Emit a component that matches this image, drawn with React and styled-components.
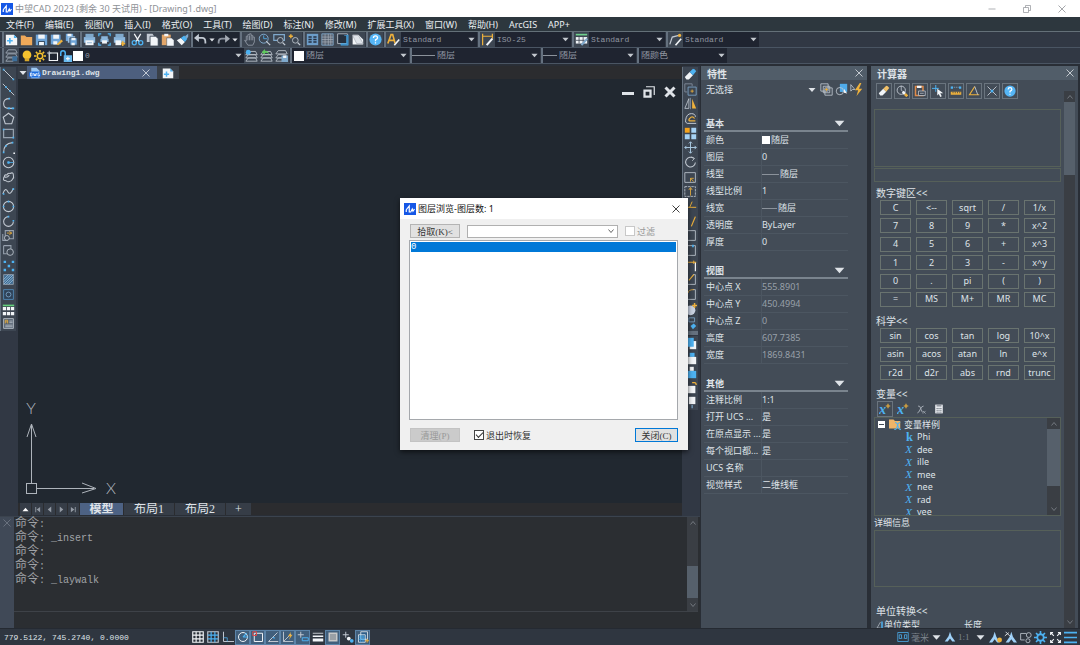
import React from "react";
import styled, { createGlobalStyle } from "styled-components";

const L = "#c3cad3";
const B = "#4db2f2";
const O = "#eeb13c";
const W = "#f2f5f8";
const S = "#7fa9cc";

const icons = {
  logo: (
    <>
      <rect width="16" height="16" fill="#1557e6" />
      <path d="M3 12V9M3 9l4-5v8h2l2-4 1 3 2-3" stroke="#fff" strokeWidth="1.6" fill="none" />
    </>
  ),
  newFile: (
    <>
      <path d="M1 2h10l4 4v9H1z" fill={W} />
      <path d="M11 2v4h4z" fill={B} />
      <path d="M6 6v7M2.500 9.500h7" stroke={B} strokeWidth="2" />
    </>
  ),
  folder: <path d="M1 3h5l2 2h7v10H1z" fill="#efa95a" />,
  save: (
    <>
      <path d="M1 2h14v13H1z" fill="#6ea4d8" />
      <path d="M4 2h8v5H4z" fill={W} />
      <path d="M4 10h8v5H4z" fill="#26374b" />
      <path d="M5 11h6v4H5z" fill={W} />
    </>
  ),
  saveAs: (
    <>
      <path d="M1 2h12v12H1z" fill="#6ea4d8" />
      <path d="M4 2h7v5H4zM4 10h5v4H4z" fill={W} />
      <path d="M8 14l6-6 2 2-6 5z" fill={O} />
    </>
  ),
  saveAll: (
    <>
      <path d="M1 1h9v9H1z" fill="#6ea4d8" />
      <path d="M3 1h5v3H3z" fill={W} />
      <path d="M3.500 4h9v8h-9z" fill="#9cc3e6" />
      <path d="M6 6h9v9H6z" fill="#6ea4d8" stroke="#394453" />
      <path d="M8 6h5v3H8zM8 12h4v3H8z" fill={W} />
    </>
  ),
  print: (
    <>
      <path d="M3 1h10v4H3z" fill={S} />
      <path d="M1 5h14v7H1z" fill="#8ab6dc" />
      <path d="M3 9h10v6H3z" fill={W} />
      <path d="M5 12h6" stroke={S} />
    </>
  ),
  preview: (
    <>
      <path d="M1 4V1h3M12 1h3v3M15 12v3h-3M4 15H1v-3" stroke={B} fill="none" strokeWidth="1.500" />
      <path d="M4 4h8v3H4zM3 7h10v4H3z" fill="#8ab6dc" />
      <path d="M5 9h6v4H5z" fill={W} />
    </>
  ),
  plot: (
    <>
      <path d="M3 1h10v4H3z" fill={S} />
      <path d="M1 5h14v7H1z" fill="#8ab6dc" />
      <path d="M3 9h7v6H3z" fill={W} />
      <path d="M10 13h5M12 10v6" stroke={O} strokeWidth="2" />
    </>
  ),
  cut: (
    <>
      <path d="M4 1l6 10M12 1L6 11" stroke={W} strokeWidth="1.500" />
      <circle cx="4" cy="12" r="2.500" stroke={B} strokeWidth="1.600" fill="none" />
      <circle cx="12" cy="12" r="2.500" stroke={B} strokeWidth="1.600" fill="none" />
    </>
  ),
  copy: (
    <>
      <path d="M1 1h7l2 3v7H1z" fill={L} />
      <path d="M5 4h7l3 3v9H5z" fill={W} stroke="#394453" />
    </>
  ),
  paste: (
    <>
      <path d="M1 2h11v13H1z" fill="#e2a66a" />
      <path d="M4 1h5v3H4z" fill={W} />
      <path d="M7 6h6l3 3v7H7z" fill={W} stroke="#394453" strokeWidth=".6" />
    </>
  ),
  match: (
    <>
      <path d="M1 9l5-3 5 5-4 4z" fill={W} />
      <path d="M6 6l4-3 4 4-3 4z" fill={B} />
      <path d="M11 4l4-3v4l-2 2z" fill={S} />
    </>
  ),
  undo: (
    <>
      <path d="M3 6h7q4 0 4 5v2" stroke={L} strokeWidth="2.200" fill="none" />
      <path d="M6 1v10L0 6z" fill={L} />
    </>
  ),
  redo: (
    <>
      <path d="M13 7H6q-4 0-4 4v2" stroke="#8d949f" strokeWidth="2.200" fill="none" />
      <path d="M10 2v10l6-5z" fill="#a5abb4" />
    </>
  ),
  hand: (
    <path
      d="M4 10V4h2V2h2V1h2v2h2v2h2v6l-2 4H6L2 9z M6 4v5M8 3v6M10 3v6M12 5v4"
      stroke="#878f9b"
      strokeWidth="1.200"
      fill="none"
    />
  ),
  zoom: (
    <>
      <circle cx="7" cy="7" r="5.500" stroke={S} strokeWidth="1.200" fill="none" />
      <path d="M7 3v4h4" stroke={B} fill="none" />
      <path d="M10 10l5 5" stroke={L} strokeWidth="1.500" />
    </>
  ),
  zoomWindow: (
    <>
      <path d="M1 2h13v7H1z" stroke={S} strokeWidth="1.500" fill="none" />
      <circle cx="9" cy="9" r="3.500" stroke={L} fill="#3b4451" />
      <path d="M12 12l3 3" stroke={L} strokeWidth="1.500" />
    </>
  ),
  zoomPrev: (
    <>
      <path d="M1 4h5M3.500 1.500v5" stroke={O} strokeWidth="1.800" />
      <circle cx="9" cy="9" r="3.500" stroke={L} fill="none" />
      <path d="M12 12l3 3" stroke={L} strokeWidth="1.500" />
    </>
  ),
  propsPanel: (
    <>
      <path d="M1 1h14v14H1z" fill="#6c9dc9" />
      <path d="M3 5h4M3 8h4M3 11h4M9 5h4M9 8h4M9 11h4" stroke="#263142" strokeWidth="1.800" />
    </>
  ),
  design: (
    <>
      <path d="M1 1h14v14H1z" stroke={S} fill="#5b6573" />
      <path d="M5 1v14M9 1v14M12 1v14M1 5h14M1 8h14M1 11h14" stroke="#a8b0bb" strokeWidth=".8" />
    </>
  ),
  palette: (
    <>
      <path d="M2 1h12v12H2z" stroke={L} fill="#26303e" />
      <path d="M10 3h3v10H6v2h9V2" stroke={B} fill="#3c8bc2" strokeWidth=".6" />
    </>
  ),
  note: (
    <>
      <path d="M2 2h7l6 6v6H2z" fill={W} />
      <path d="M2 3l5 10h8L9 3z" fill="#dfe4ea" stroke="#8b949f" strokeWidth=".6" />
    </>
  ),
  help: (
    <>
      <circle cx="8" cy="8" r="7.500" fill="#55b5f5" />
      <path d="M5.500 6q0-2.500 2.500-2.500T10.500 6Q10.500 7 8 8.500V10M8 11.500v1.500" stroke="#fff" strokeWidth="1.600" fill="none" />
    </>
  ),
  textStyle: (
    <>
      <path d="M1 13L5 2h2l3 11M3 9h6" stroke={O} strokeWidth="2" fill="none" />
      <path d="M9 15l6-7" stroke={W} strokeWidth="2" />
    </>
  ),
  dimStyle: (
    <>
      <path d="M2 1v14M14 1v6M2 4h12" stroke={O} strokeWidth="1.500" />
      <path d="M7 15l7-8" stroke={W} strokeWidth="2.500" />
    </>
  ),
  tableStyle: (
    <>
      <path d="M1 1h14v2H1z" fill="#6fd08c" />
      <path d="M1 5h14v8H1z" fill={W} />
      <path d="M5 5v8M10 5v8M1 9h14" stroke="#3b4451" />
      <path d="M8 15l7-8" stroke={S} strokeWidth="2.500" />
    </>
  ),
  leaderStyle: (
    <>
      <path d="M1 14l3-9 8-2" stroke={L} fill="none" strokeWidth="1.500" />
      <circle cx="13" cy="3" r="2" fill={O} />
      <path d="M8 15l7-8" stroke={W} strokeWidth="2" />
    </>
  ),
  layers: (
    <>
      <path d="M4 1h9l2 4H1zM4 6h9l2 4H1zM4 11h6v4H1z" fill="none" stroke="#97a1ae" strokeWidth="1.200" />
      <path d="M9 9h6v6H9z" fill="#3c6f9c" />
    </>
  ),
  layerBlue: (
    <>
      <path d="M4 3h9l2 4H1zM4 7h9l2 4H1zM4 11h9l2 4H1z" fill="#3b4451" stroke={L} />
      <circle cx="4" cy="4" r="3" fill={B} />
    </>
  ),
  layerGreen: (
    <>
      <path d="M4 3h9l2 4H1zM4 7h9l2 4H1zM4 11h9l2 4H1z" fill="#3b4451" stroke={L} />
      <path d="M6 0L2 4l4 3V5q4-1 5 2 0-5-5-5z" fill="#5fc95e" />
    </>
  ),
  layerSave: (
    <>
      <path d="M4 2h9l2 4H1zM4 7h9l2 4H1zM4 11h6v4H1z" fill="#3b4451" stroke={L} />
      <path d="M8 8h8v8H8z" fill={S} />
      <path d="M10 8h4v3h-4z" fill={W} />
    </>
  ),
  bulb: (
    <>
      <circle cx="8" cy="6.500" r="5.800" fill="#f5c22f" />
      <path d="M5 11h6v4H5z" fill="#d8a82a" />
    </>
  ),
  sun: (
    <>
      <circle cx="8" cy="8" r="3.600" fill="none" stroke="#f5c22f" strokeWidth="2" />
      <path
        d="M8 0v3M8 13v3M0 8h3M13 8h3M2.500 2.500l2 2M11.500 11.500l2 2M2.500 13.500l2-2M11.500 4.500l2-2"
        stroke="#f5c22f"
        strokeWidth="2"
      />
    </>
  ),
  viewport: (
    <>
      <path d="M3 4h11v10H3z" stroke={W} strokeWidth="1.500" fill="none" />
      <path d="M0 4h6M3 1v6" stroke={L} strokeWidth="1.200" />
    </>
  ),
  unlock: (
    <>
      <path d="M1 8V4q0-3 3-3t3 3v4" stroke={B} strokeWidth="2" fill="none" />
      <path d="M5 7h11v9H5z" fill="#68b9ee" />
      <path d="M10.500 9v5M8 11.500h5" stroke={W} strokeWidth="1.500" />
    </>
  ),
  dwg: (
    <>
      <path d="M3 1h7l4 4v10H3z" fill="#9dc9f5" />
      <rect y="6" width="16" height="8" rx="3" fill="#1f6fe0" />
      <path d="M2 8v4h2V8zM6 8l1 4 1-3 1 3 1-4M14 8h-2v4h2v-2" stroke="#fff" fill="none" />
    </>
  ),
  line: (
    <>
      <path d="M2 2l12 12" stroke={L} strokeWidth="1.200" />
      <path d="M1 1h2v2H1zM13 13h2v2h-2z" fill={B} />
    </>
  ),
  xline: (
    <>
      <path d="M1 1l14 14" stroke={L} strokeWidth="1.200" />
      <path d="M4 4h2v2H4zM9 9h2v2H9z" fill={B} />
    </>
  ),
  pline: (
    <>
      <path d="M9 2Q2 2 2 8t6 6h6" stroke={L} strokeWidth="1.300" fill="none" />
      <path d="M8 1h2v2H8zM7 13h3v2H7zM12 13h3v2h-3z" fill={B} />
    </>
  ),
  polygon: <path d="M8 1.500l6.500 5-2.500 8H4l-2.500-8z" stroke={L} strokeWidth="1.300" fill="none" />,
  rect: (
    <>
      <path d="M2 3h12v10H2z" stroke="#97a1ae" strokeWidth="1.500" fill="none" />
      <path d="M1 2h2v2H1zM13 12h2v2h-2z" fill={B} />
    </>
  ),
  arc: (
    <>
      <path d="M2 14Q2 3 13 2" stroke={L} strokeWidth="1.300" fill="none" />
      <path d="M1 13h2v2H1zM4 5h2v2H4zM12 1h2v2h-2z" fill={B} />
      <path d="M14 14h2v2h-2z" fill={W} />
    </>
  ),
  circle: (
    <>
      <circle cx="8" cy="8" r="6.500" stroke={L} strokeWidth="1.300" fill="none" />
      <path d="M7 7h2v2H7zM8 8h6" fill={B} stroke={B} />
    </>
  ),
  cloud: (
    <path
      d="M3 7q0-3 3-2 1-3 4-2 4-2 4 2 1 3-1 5-1 3-4 3-2 1-4-1-4 0-3-3 0-2 1-2q3 2 6-2"
      stroke={L}
      strokeWidth="1.300"
      fill="none"
    />
  ),
  spline: (
    <>
      <path d="M1 11q3-9 6-3t7-4" stroke={L} strokeWidth="1.300" fill="none" />
      <path d="M1 10h2v2H1zM13 4h2v2h-2z" fill={B} />
    </>
  ),
  ellipse: (
    <>
      <circle cx="8" cy="8" r="6.300" stroke={L} strokeWidth="1.300" fill="none" />
      <path d="M7 1h2v2H7zM1 7h2v2H1zM13 7h2v2h-2z" fill={B} />
    </>
  ),
  ellipseArc: (
    <>
      <path d="M8 2a6 6 0 1 0 6 6" stroke={L} strokeWidth="1.300" fill="none" />
      <path d="M7 1h2v2H7zM13 6h2v2h-2z" fill={B} />
    </>
  ),
  insert: (
    <>
      <path d="M4 2h10v10H4zM1 6v8h6" stroke="#97a1ae" strokeWidth="1.300" fill="none" />
      <circle cx="6" cy="11" r="3" stroke={L} fill="#3b4451" />
      <path d="M6 5h6M9 3l3 2-3 2" stroke={O} fill="none" />
    </>
  ),
  block: (
    <>
      <path d="M2 2h9v4M2 2v10h4" stroke="#97a1ae" strokeWidth="1.300" fill="none" />
      <circle cx="10" cy="10" r="4" stroke={L} fill="none" />
    </>
  ),
  points: <path d="M2 2h3v3H2zM12 2h3v3h-3zM7 7h3v3H7zM2 12h3v3H2zM12 12h3v3h-3z" fill={B} />,
  hatch: (
    <>
      <path d="M2 2h12v12H2z" stroke="#97a1ae" fill="#3f6c93" />
      <path d="M2 8l6-6M2 14L14 2M8 14l6-6M5 14l9-9M2 11l9-9" stroke="#b6d8f2" strokeWidth=".8" />
    </>
  ),
  region: (
    <>
      <path d="M2 2h12v12H2z" stroke="#5491c2" fill="#2e4157" />
      <circle cx="8" cy="8" r="3" stroke={S} fill="none" />
    </>
  ),
  table: (
    <>
      <path d="M1 2h14v2H1z" fill="#64cf7c" />
      <path d="M1 5h4v4H1zM6 5h4v4H6zM11 5h4v4h-4zM1 11h4v4H1zM6 11h4v4H6zM11 11h4v4h-4z" fill={W} />
    </>
  ),
  mtext: (
    <>
      <path d="M2 2h12v12H2z" stroke={L} fill="#54606f" />
      <path d="M4 8V4h3v4M4 6h3" stroke={O} fill="none" />
      <path d="M9 5h4M9 7h4M4 10h9M4 12h9" stroke={L} />
    </>
  ),
  erase: (
    <>
      <path d="M1 11l6-6 4 4-5 5H3z" fill={W} />
      <path d="M7 5l4-4q2 0 4 3l-4 5z" fill={B} />
    </>
  ),
  copyObj: (
    <>
      <path d="M10 4V1H1v10h3" stroke="#8793a3" fill="none" />
      <path d="M5 5h10v10H5z" stroke={S} fill="none" />
      <path d="M10 8v4M8 10h4" stroke={O} />
    </>
  ),
  mirror: (
    <>
      <path d="M6 2v12H1z" stroke={L} fill="none" />
      <path d="M10 2v12h5z" fill={O} />
      <path d="M8 1v14" stroke="#8793a3" />
    </>
  ),
  offset: (
    <>
      <path d="M15 14H4q-3-1-2-4Q3 2 9 2q5 0 5 4" stroke={L} fill="none" strokeWidth="1.200" />
      <path d="M14 11H7q-2-1 0-3 3-4 6 0" stroke={O} fill="none" strokeWidth="1.500" />
    </>
  ),
  array: (
    <>
      <path d="M1 1h6v6H1z" fill="#f6a31c" />
      <path d="M9 1h6v6H9zM1 9h6v6H1zM9 9h6v6H9z" fill="#a6d2f5" />
    </>
  ),
  move: (
    <path d="M8 1v14M1 8h14M6 3l2-2 2 2M6 13l2 2 2-2M3 6L1 8l2 2M13 6l2 2-2 2" stroke="#a9c7e0" fill="none" strokeWidth="1.200" />
  ),
  rotate: (
    <>
      <path d="M12 3a6 6 0 1 0 2 5" stroke={L} strokeWidth="1.300" fill="none" />
      <path d="M9 1l4 2-3 3" stroke={L} fill="none" />
    </>
  ),
  scale: (
    <>
      <path d="M1 2h13v12H1z" stroke={L} fill="none" />
      <path d="M8 13V9h4M8 9l4 4" stroke={O} fill="none" />
    </>
  ),
  stretch: (
    <>
      <path d="M1 2h13v12H1z" stroke={L} strokeDasharray="3 1" fill="none" />
      <path d="M8 13V4M6 6l2-3 2 3" stroke={O} fill="none" />
    </>
  ),
  trim: <path d="M1 9h14M10 2l-3 7" stroke={O} strokeWidth="1.200" />,
  extend: <path d="M14 2L9 14" stroke={O} strokeWidth="1.500" />,
  box: <path d="M2 2h12v12H2z" stroke={L} fill="none" />,
  boxBlue: (
    <>
      <path d="M2 2h12v12H2z" stroke={L} fill="none" />
      <path d="M10 1h2v3h-2z" fill={B} />
    </>
  ),
  join: (
    <>
      <path d="M14 4v11" stroke={W} strokeWidth="1.500" />
      <path d="M5 4h10M12 2v4" stroke={O} strokeWidth="1.200" />
    </>
  ),
  chamfer: (
    <>
      <path d="M2 14h12V2h-3" stroke={L} fill="none" />
      <path d="M6 9l6-7" stroke={O} strokeWidth="1.300" />
    </>
  ),
  fillet: (
    <>
      <path d="M2 14h12V2h-3" stroke={L} fill="none" />
      <path d="M5 6q0-4 7-4" stroke={O} fill="none" />
    </>
  ),
  explode: (
    <>
      <circle cx="8" cy="9" r="6" fill="#c9d2e2" />
      <path d="M13 0v6M10 3h6" stroke={O} strokeWidth="1.800" />
    </>
  ),
  brush: (
    <>
      <path d="M6 1h7v5H6z" stroke={S} fill="none" />
      <path d="M8 11l4-3 3 3-4 4z" fill={B} />
    </>
  ),
  front: (
    <>
      <path d="M7 5h8v10H7z" fill={W} />
      <path d="M2 1h10v11H2z" fill={B} />
    </>
  ),
  back: (
    <>
      <path d="M7 1h6v5H7z" fill={B} />
      <path d="M5 6h10v9H5z" fill={W} />
    </>
  ),
  above: (
    <>
      <path d="M7 1h5v5H7z" fill={W} />
      <path d="M5 6h10v9H5z" fill={B} />
    </>
  ),
  under: (
    <>
      <path d="M5 6h9v9H5z" fill={W} />
      <path d="M10 2h3q2 0 2 3" stroke={O} strokeWidth="1.500" fill="none" />
    </>
  ),
  textFront: (
    <>
      <path d="M6 1h8v9H6z" fill={W} />
      <path d="M10 11v4" stroke={S} strokeWidth="1.500" />
    </>
  ),
  selectMulti: (
    <>
      <path d="M1 1h9v9H1zM4 4h8v8H4zM6 6h9v9H6z" stroke={L} fill="none" />
      <path d="M8 6v4M6 8h4" stroke={O} />
    </>
  ),
  selectObj: (
    <>
      <path d="M6 1h9v10H6z" fill="#4fabea" />
      <circle cx="6" cy="10" r="4.500" stroke={L} fill="none" />
      <path d="M11 7l4 6-4-1z" fill={W} />
    </>
  ),
  quickSelect: (
    <>
      <path d="M1 2l5 6-3 0-2 2z" stroke={L} fill="none" />
      <path d="M12 0L6 9h4l-2 7 7-9h-4l3-7z" fill={O} />
    </>
  ),
  eraser2: (
    <>
      <path d="M1 11l6-6 4 4-5 5H3z" fill={W} />
      <path d="M7 5l4-4q2 0 4 3l-4 5z" fill="#f0c068" />
    </>
  ),
  history: (
    <>
      <circle cx="7" cy="7" r="5.500" stroke={L} strokeWidth="1.200" fill="none" />
      <path d="M7 1v6l4 3" stroke={L} fill="none" />
      <path d="M9 9l3 3" stroke={W} strokeWidth="3.500" />
      <path d="M12 12l3 3" stroke={O} strokeWidth="3.500" />
    </>
  ),
  pasteCalc: (
    <>
      <path d="M2 2h10v12H2z" stroke="#e08a4a" strokeWidth="2" fill="none" />
      <path d="M4 1h6v3H4z" fill={W} />
      <path d="M6 8h9v6H6z" fill="#3b4451" stroke={L} />
      <path d="M8 11h5" stroke={L} />
    </>
  ),
  pick: (
    <>
      <path d="M5 0v9M0 4.500h9" stroke={B} strokeWidth="1.300" />
      <path d="M7 5l8 6-4 0 2 4-2 1-2-4-2 2z" fill={W} />
    </>
  ),
  distance: (
    <>
      <path d="M2 3h12" stroke={S} strokeDasharray="2 1" />
      <path d="M1 2h3v3H1zM12 2h3v3h-3z" fill={B} />
      <path d="M1 9h14v4H1z" fill={O} />
      <path d="M4 9v2M7 9v2M10 9v2M13 9v2" stroke="#3b4451" />
    </>
  ),
  angle: (
    <>
      <path d="M9 2L2 13h13" stroke={O} strokeWidth="1.500" fill="none" />
      <path d="M9 2l4 11" stroke={L} strokeWidth="1.200" />
    </>
  ),
  intersect: (
    <>
      <path d="M2 2l12 12M14 2L2 14" stroke={L} strokeWidth="1.200" />
      <circle cx="8" cy="8" r="2" fill={B} />
    </>
  ),
  newVar: (
    <>
      <text x="0" y="15" fontFamily="Liberation Serif, serif" fontSize="19" fontStyle="italic" fontWeight="bold" fill={B}>x</text>
      <path d="M12 1v6M9 4h6" stroke={O} strokeWidth="1.500" />
    </>
  ),
  delVar: (
    <>
      <path d="M3 3q3-1 4 4t3 5M11 3q-3 0-5 5t-4 5" stroke="#aeb5be" strokeWidth="1.300" fill="none" />
      <path d="M10 10l4 4M14 10l-4 4" stroke="#aeb5be" />
    </>
  ),
  calc: (
    <>
      <path d="M2 1h12v14H2z" fill={W} />
      <path d="M4 3h8M4 7h2M7 7h2M10 7h2M4 10h2M7 10h2M10 10h2M4 13h2M7 13h2M10 13h2" stroke="#3b4451" strokeWidth="1.300" />
    </>
  ),
  varX: (
    <text x="2" y="14" fontFamily="Liberation Serif, serif" fontSize="18" fontStyle="italic" fill={B}>X</text>
  ),
  varK: (
    <text x="3" y="15" fontFamily="Liberation Serif, serif" fontSize="20" fontWeight="bold" fill={B}>k</text>
  ),
  folderX: (
    <>
      <path d="M0 2h6l2 2h7v10H0z" fill="#efb469" />
      <path d="M8 6q3 0 4 5t4 4M15 6q-3 0-4 5t-4 4" stroke={B} strokeWidth="1.500" fill="none" />
    </>
  ),
  grid: (
    <>
      <path d="M1 1h14v14H1z" fill="#2a3039" stroke={W} strokeWidth="1.500" />
      <path d="M5.500 1v14M10.500 1v14M1 5.500h14M1 10.500h14" stroke={W} strokeWidth="1.500" />
    </>
  ),
  snap: (
    <>
      <path d="M1 1h14v14H1z" fill="#2a3039" stroke={L} strokeWidth="1.500" />
      <path d="M5.500 1v14M10.500 1v14M1 5.500h14M1 10.500h14" stroke={B} strokeWidth="1.600" />
    </>
  ),
  ortho: (
    <>
      <path d="M2 1v13h14" stroke={L} strokeWidth="1.300" fill="none" />
      <path d="M2 9h5v5" stroke={B} fill="none" />
    </>
  ),
  polar: (
    <>
      <circle cx="8" cy="8" r="6" stroke={W} strokeWidth="1.300" fill="none" />
      <path d="M8 8h7M8 8l5-5" stroke={B} strokeWidth="1.500" />
    </>
  ),
  osnap: (
    <>
      <path d="M3 3h11v11H3z" stroke={W} fill="none" strokeWidth="1.300" />
      <path d="M1 1h5v5H1z" stroke="#e04848" fill="none" strokeWidth="1.300" />
    </>
  ),
  otrack: (
    <>
      <path d="M14 2L2 14h13" stroke={L} strokeWidth="1.300" fill="none" />
      <path d="M7 8h3v3" fill={B} />
    </>
  ),
  ducs: (
    <>
      <path d="M2 1v13h13M2 14L12 4" stroke={L} strokeWidth="1.200" fill="none" />
      <path d="M12 1L8 7h3l-2 5 5-7h-3z" fill={O} />
    </>
  ),
  dyn: (
    <>
      <path d="M5 1v8M1 5h8" stroke={L} strokeWidth="1.300" />
      <path d="M7 9h8v4H7z" stroke={B} fill="none" strokeWidth="1.300" />
    </>
  ),
  lwt: (
    <>
      <path d="M1 3h14" stroke={W} strokeWidth="1" />
      <path d="M1 7h14" stroke={W} strokeWidth="2" />
      <path d="M1 12h14" stroke={W} strokeWidth="4" />
    </>
  ),
  transparency: <path d="M3 3h10v10H3z" fill="#9aa0a6" stroke="#c8c8c8" strokeWidth="2" />,
  cycle: (
    <>
      <path d="M5 1v8M1 5h8" stroke={L} strokeWidth="1.300" />
      <circle cx="9" cy="10" r="2.500" fill={W} />
      <circle cx="13" cy="13" r="2.500" fill={B} />
    </>
  ),
  qprops: (
    <>
      <path d="M5 1h9v10H5zM2 5h9v10H2z" fill="#2f5d87" stroke={W} />
      <path d="M2 8h9M2 11h9M5 5v10M8 5v10" stroke={B} />
      <path d="M11 13h5M13.500 10.500v5" stroke={O} strokeWidth="1.300" />
    </>
  ),
  anno: <path d="M8 1l2 6 5 7-4 0-3-4-3 4-4 0 5-7z" fill="#9fd0f7" />,
  annoBulb: (
    <>
      <path d="M7 1l2 6 4 7-3 0-3-4-3 4-4 0 5-7z" fill="#9fd0f7" />
      <circle cx="13" cy="11" r="3" fill={O} />
    </>
  ),
  annoScale: (
    <>
      <path d="M9 1l2 6 5 7-4 0-3-4-3 4-4 0 5-7z" fill="#9fd0f7" />
      <path d="M2 1l6 6M1 6l5-4" stroke={W} />
    </>
  ),
  isolate: (
    <>
      <path d="M9 3H2v8h5" stroke={L} fill="none" />
      <circle cx="12" cy="5" r="3" stroke={L} fill="none" />
      <circle cx="11" cy="12" r="2.500" stroke={L} fill="none" />
    </>
  ),
  gear: (
    <>
      <circle cx="8" cy="8" r="4" stroke={B} strokeWidth="2.200" fill="none" />
      <path
        d="M8 0v4M8 12v4M0 8h4M12 8h4M2.500 2.500l2.500 2.500M11 11l2.500 2.500M2.500 13.500L5 11M11 5l2.500-2.500"
        stroke={B}
        strokeWidth="2"
      />
    </>
  ),
  full: (
    <path d="M2 5V2h3M11 2h3v3M14 11v3h-3M5 14H2v-3M2 2l4 4M14 2l-4 4M2 14l4-4M14 14l-4-4" stroke={W} strokeWidth="1.300" fill="none" />
  ),
  menu: <path d="M0 2h16M0 8h16M0 14h16" stroke={B} strokeWidth="2" />,
  units: (
    <>
      <path d="M1 2h14v12H1z" stroke={B} fill="none" />
      <path d="M3 5h3v5H3zM10 5h3v5h-3zM8 9v1" stroke={B} fill="none" />
    </>
  ),
  unitMark: (
    <>
      <path d="M9 2L2 14h7" stroke={L} strokeWidth="1.300" fill="none" />
      <path d="M12 1v14" stroke={B} strokeWidth="3" />
    </>
  ),
  caret: <path d="M1 4h14l-7 8z" fill="currentColor" />,
  up: <path d="M1 12h14L8 4z" fill="currentColor" />,
  first: <path d="M3 2h2v12H3zM14 2v12L6 8z" fill="currentColor" />,
  prev: <path d="M12 1v14L4 8z" fill="currentColor" />,
  next: <path d="M4 1v14l8-7z" fill="currentColor" />,
  last: <path d="M11 2h2v12h-2zM2 2v12l8-6z" fill="currentColor" />,
  close: <path d="M1 1l14 14M15 1L1 15" stroke="currentColor" strokeWidth="1.600" />,
  closeBold: <path d="M2 2l12 12M14 2L2 14" stroke="currentColor" strokeWidth="4" />,
  min: <path d="M1 8h14" stroke="currentColor" strokeWidth="1.400" />,
  minBold: <path d="M0 10h16" stroke="currentColor" strokeWidth="4" />,
  restore: <path d="M1 5h10v10H1zM5 5V1h10v10h-4" stroke="currentColor" strokeWidth="1.400" fill="none" />,
  restoreBold: (
    <>
      <path d="M2 6h8v8H2z" stroke="currentColor" strokeWidth="3" fill="none" />
      <path d="M4 1h11v11" stroke="currentColor" strokeWidth="1.600" fill="none" />
    </>
  ),
  chevUp: <path d="M3 11l5-6 5 6" stroke="currentColor" strokeWidth="1.500" fill="none" />,
  chevDown: <path d="M3 5l5 6 5-6" stroke="currentColor" strokeWidth="1.500" fill="none" />,
};

function Icon({ name, size = 13 }) {
  return (
    <Svg viewBox="0 0 16 16" width={size} height={size} aria-hidden="true">
      {icons[name]}
    </Svg>
  );
}

function Tools({ names }) {
  return names.map((n) => (
    <ToolButton key={n} type="button" aria-label={n}>
      <Icon name={n} />
    </ToolButton>
  ));
}

function Combo({ icon, before, value, width, label, cjk }) {
  return (
    <ComboBox $width={width}>
      {icon && (
        <ComboIcon>
          <Icon name={icon} />
        </ComboIcon>
      )}
      {before}
      <ComboSelect aria-label={label} $cjk={cjk}>
        <option>{value}</option>
      </ComboSelect>
      <Icon name="caret" size={7} />
    </ComboBox>
  );
}

function Scrollbar({ thumbTop, thumb, width, top }) {
  return (
    <Track $width={width} $top={top}>
      <Icon name="chevUp" size={8} />
      <Thumb $top={thumbTop} $height={thumb} />
      <TrackEnd>
        <Icon name="chevDown" size={8} />
      </TrackEnd>
    </Track>
  );
}

const menus = [
  "文件(F)", "编辑(E)", "视图(V)", "插入(I)", "格式(O)", "工具(T)", "绘图(D)",
  "标注(N)", "修改(M)", "扩展工具(X)", "窗口(W)", "帮助(H)", "ArcGIS", "APP+",
];

const drawTools = [
  "line", "xline", "pline", "polygon", "rect", "arc", "circle", "cloud", "spline",
  "ellipse", "ellipseArc", "insert", "block", "points", "hatch", "region", "table", "mtext",
];

const modifyTools = [
  "erase", "copyObj", "mirror", "offset", "array", "move", "rotate", "scale", "stretch",
  "trim", "extend", "box", "boxBlue", "join", "chamfer", "fillet", "explode", "brush",
];

const orderTools = ["front", "back", "above", "under", "textFront"];

const sections = [
  {
    title: "基本",
    rows: [
      ["颜色", "随层", "swatch"],
      ["图层", "0"],
      ["线型", "随层", "line"],
      ["线型比例", "1"],
      ["线宽", "随层", "short"],
      ["透明度", "ByLayer"],
      ["厚度", "0"],
    ],
  },
  {
    title: "视图",
    muted: true,
    rows: [
      ["中心点 X", "555.8901"],
      ["中心点 Y", "450.4994"],
      ["中心点 Z", "0"],
      ["高度", "607.7385"],
      ["宽度", "1869.8431"],
    ],
  },
  {
    title: "其他",
    rows: [
      ["注释比例", "1:1"],
      ["打开 UCS ...", "是"],
      ["在原点显示 ...", "是"],
      ["每个视口都...", "是"],
      ["UCS 名称", ""],
      ["视觉样式", "二维线框"],
    ],
  },
];

const numberKeys = [
  "C", "<--", "sqrt", "/", "1/x",
  "7", "8", "9", "*", "x^2",
  "4", "5", "6", "+", "x^3",
  "1", "2", "3", "-", "x^y",
  "0", ".", "pi", "(", ")",
  "=", "MS", "M+", "MR", "MC",
];

const scienceKeys = [
  "sin", "cos", "tan", "log", "10^x",
  "asin", "acos", "atan", "ln", "e^x",
  "r2d", "d2r", "abs", "rnd", "trunc",
];

const calcTools = ["eraser2", "history", "pasteCalc", "pick", "distance", "angle", "intersect", "help"];
const variables = ["Phi", "dee", "ille", "mee", "nee", "rad", "vee"];

const statusTools = [
  ["grid"], ["snap"], ["ortho"], ["polar", 1], ["osnap", 1], ["otrack", 1],
  ["ducs", 1], ["dyn", 1], ["lwt"], ["transparency", 1], ["cycle"], ["qprops", 1],
];

function Toolbars() {
  return (
    <>
      <Toolbar>
        <Handle />
        <Tools names={["newFile", "folder", "save", "saveAs", "saveAll"]} />
        <Handle />
        <Tools names={["print", "preview", "plot"]} />
        <Handle />
        <Tools names={["cut", "copy", "paste", "match"]} />
        <Handle />
        <UndoGroup>
          <Tools names={["undo"]} />
          <DropButton type="button" aria-label="undo list"><Icon name="caret" size={6} /></DropButton>
          <Tools names={["redo"]} />
          <DropButton type="button" aria-label="redo list"><Icon name="caret" size={6} /></DropButton>
        </UndoGroup>
        <Handle />
        <Tools names={["hand", "zoom", "zoomWindow", "zoomPrev"]} />
        <Handle />
        <Tools names={["propsPanel", "design", "palette", "note"]} />
        <Handle />
        <Tools names={["help"]} />
        <Handle />
        <Combo icon="textStyle" value="Standard" width={91} label="文字样式" />
        <Handle />
        <Combo icon="dimStyle" value="ISO-25" width={91} label="标注样式" />
        <Handle />
        <Combo icon="tableStyle" value="Standard" width={91} label="表格样式" />
        <Handle />
        <Combo icon="leaderStyle" value="Standard" width={91} label="引线样式" />
      </Toolbar>
      <Toolbar>
        <Handle />
        <Tools names={["layers"]} />
        <Combo
          width={225}
          label="图层"
          value="0"
          before={
            <LayerState>
              <Icon name="bulb" size={12} />
              <Icon name="sun" size={12} />
              <Icon name="viewport" size={12} />
              <Icon name="unlock" size={12} />
              <Swatch $size={10} />
            </LayerState>
          }
        />
        <Tools names={["layerBlue", "layerGreen", "layerSave"]} />
        <Handle />
        <Combo width={117} cjk label="颜色" value="随层" before={<LayerState><Swatch $size={10} /></LayerState>} />
        <Handle />
        <Combo width={128} cjk label="线型" value="随层" before={<Dash $width={23} />} />
        <Handle />
        <Combo width={93} cjk label="线宽" value="随层" before={<Dash $width={14} />} />
        <Handle />
        <Combo width={88} cjk label="打印样式" value="随颜色" />
      </Toolbar>
    </>
  );
}

function Drawing() {
  return (
    <DrawingArea>
      <DocTabs>
        <TabArrow type="button" aria-label="tabs"><Icon name="caret" size={8} /></TabArrow>
        <DocTab>
          <Icon name="dwg" size={12} />
          <DocName>Drawing1.dwg</DocName>
          <PlainButton type="button" aria-label="close tab"><Icon name="close" size={8} /></PlainButton>
        </DocTab>
        <NewTab type="button" aria-label="new tab"><Icon name="newFile" size={12} /></NewTab>
      </DocTabs>
      <Canvas>
        <DocControls>
          <PlainButton type="button" aria-label="minimize"><Icon name="minBold" size={12} /></PlainButton>
          <PlainButton type="button" aria-label="restore"><Icon name="restoreBold" size={12} /></PlainButton>
          <PlainButton type="button" aria-label="close"><Icon name="closeBold" size={12} /></PlainButton>
        </DocControls>
        <Ucs width="104" height="104" viewBox="0 0 104 104">
          <path
            d="M13.500 84V26M9 38l4.500-13L18 38M19 89.500h57M64 84l14 5.500L64 94"
            stroke="#aeb4bb"
            fill="none"
          />
          <rect x="8.500" y="84.500" width="10" height="10" stroke="#aeb4bb" fill="none" />
          <text x="13" y="15" textAnchor="middle">Y</text>
          <text x="93" y="95" textAnchor="middle">X</text>
        </Ucs>
      </Canvas>
      <LayoutTabs>
        {["up", "first", "prev", "next", "last"].map((n) => (
          <LayoutNav key={n} type="button" aria-label={n} $bright={n === "up"}>
            <Icon name={n} size={7} />
          </LayoutNav>
        ))}
        <LayoutTab type="button" $active $width={43}>模型</LayoutTab>
        <LayoutTab type="button" $width={50}>布局1</LayoutTab>
        <LayoutTab type="button" $width={50}>布局2</LayoutTab>
        <LayoutTab type="button" $width={25}>+</LayoutTab>
      </LayoutTabs>
    </DrawingArea>
  );
}

function CommandLine() {
  return (
    <CommandBox>
      <CommandGrip>
        <PlainButton type="button" aria-label="close command line"><Icon name="close" size={8} /></PlainButton>
      </CommandGrip>
      <CommandBody>
        <LogRow>
          <Log>
            {["", "_insert", "", "", "_laywalk"].map((cmd, i) => (
              <LogLine key={i}>命令<Mono>: {cmd}</Mono></LogLine>
            ))}
          </Log>
          <Scrollbar width={11} thumbTop={39} thumb={32} top={0} />
        </LogRow>
        <CommandInput aria-label="命令" />
      </CommandBody>
    </CommandBox>
  );
}

function Properties() {
  return (
    <Panel $width={166}>
      <PanelTitle>
        特性
        <PlainButton type="button" aria-label="close"><Icon name="close" size={8} /></PlainButton>
      </PanelTitle>
      <SelectionRow>
        <SelectionSelect aria-label="选择">
          <option>无选择</option>
        </SelectionSelect>
        <Icon name="caret" size={8} />
        <Tools names={["selectMulti", "selectObj", "quickSelect"]} />
      </SelectionRow>
      <Sections>
        {sections.map((s) => (
          <section key={s.title}>
            <SectionTitle>
              {s.title}
              <Icon name="caret" size={11} />
            </SectionTitle>
            <PropTable>
              <tbody>
                {s.rows.map(([name, value, mark]) => (
                  <tr key={name}>
                    <PropName scope="row">{name}</PropName>
                    <PropValue $muted={s.muted}>
                      <ValueLine>
                        {mark === "swatch" && <Swatch $size={8} />}
                        {mark === "line" && <Dash $width={17} />}
                        {mark === "short" && <Dash $width={15} />}
                        {value}
                      </ValueLine>
                    </PropValue>
                  </tr>
                ))}
              </tbody>
            </PropTable>
          </section>
        ))}
      </Sections>
    </Panel>
  );
}

function Calculator() {
  return (
    <Panel $width={207}>
      <PanelTitle>
        计算器
        <PlainButton type="button" aria-label="close"><Icon name="close" size={8} /></PlainButton>
      </PanelTitle>
      <CalcBody>
        <CalcContent>
          <CalcTools>
            {calcTools.map((n) => (
              <CalcTool key={n} type="button" aria-label={n}><Icon name={n} size={12} /></CalcTool>
            ))}
          </CalcTools>
          <History />
          <CalcInput aria-label="表达式" />
          <CalcLabel>数字键区&lt;&lt;</CalcLabel>
          <KeyGrid $height={107}>
            {numberKeys.map((k) => <Key key={k} type="button">{k}</Key>)}
          </KeyGrid>
          <CalcLabel>科学&lt;&lt;</CalcLabel>
          <KeyGrid $height={52}>
            {scienceKeys.map((k) => <Key key={k} type="button">{k}</Key>)}
          </KeyGrid>
          <CalcLabel>变量&lt;&lt;</CalcLabel>
          <VarTools>
            <CalcTool type="button" aria-label="new"><Icon name="newVar" size={12} /></CalcTool>
            <VarTool type="button" aria-label="edit"><Icon name="newVar" size={12} /></VarTool>
            <VarTool type="button" aria-label="delete"><Icon name="delVar" size={11} /></VarTool>
            <VarTool type="button" aria-label="calculate"><Icon name="calc" size={10} /></VarTool>
          </VarTools>
          <TreeBox>
            <Tree>
              <TreeItem>
                <Expander />
                <Icon name="folderX" size={12} />
                变量样例
              </TreeItem>
              {variables.map((v) => (
                <TreeItem key={v} $leaf>
                  <Icon name={v === "Phi" ? "varK" : "varX"} size={10} />
                  {v}
                </TreeItem>
              ))}
            </Tree>
            <Scrollbar width={13} thumbTop={1} thumb={57} top={0} />
          </TreeBox>
          <DetailLabel>详细信息</DetailLabel>
          <DetailBox />
          <CalcLabel>单位转换&lt;&lt;</CalcLabel>
          <UnitRow>
            <UnitCell><Icon name="unitMark" size={8} />单位类型</UnitCell>
            <UnitCell>长度</UnitCell>
          </UnitRow>
        </CalcContent>
        <Scrollbar width={11} thumbTop={1} thumb={73} top={11} />
      </CalcBody>
    </Panel>
  );
}

function LayerDialog() {
  return (
    <Dialog role="dialog" aria-labelledby="laywalk-title">
      <DialogTitle>
        <Icon name="logo" size={12} />
        <DialogName id="laywalk-title">图层浏览-图层数: 1</DialogName>
        <PlainButton type="button" aria-label="close"><Icon name="close" size={8} /></PlainButton>
      </DialogTitle>
      <DialogBody>
        <DialogRow>
          <DialogButton type="button">拾取(K)&lt;</DialogButton>
          <FilterBox>
            <FilterSelect aria-label="过滤器" />
            <Icon name="chevDown" size={8} />
          </FilterBox>
          <CheckLabel $muted>
            <Check type="checkbox" disabled />
            过滤
          </CheckLabel>
        </DialogRow>
        <LayerList>
          <LayerItem>0</LayerItem>
        </LayerList>
        <DialogFooter>
          <DialogButton type="button" disabled>清理(P)</DialogButton>
          <CheckLabel>
            <Check type="checkbox" defaultChecked />
            退出时恢复
          </CheckLabel>
          <CloseButton type="button">关闭(C)</CloseButton>
        </DialogFooter>
      </DialogBody>
    </Dialog>
  );
}

function StatusBar() {
  return (
    <Status>
      <Coords>779.5122, 745.2740, 0.0000</Coords>
      {statusTools.map(([n, on]) => (
        <StatusButton key={n} type="button" aria-label={n} $on={on}><Icon name={n} size={12} /></StatusButton>
      ))}
      <StatusRight>
        <Icon name="units" size={12} />
        <StatusText $width={20}>毫米</StatusText>
        <StatusButton type="button" aria-label="units"><Icon name="caret" size={9} /></StatusButton>
        <Icon name="anno" size={12} />
        <StatusText $width={17}>1:1</StatusText>
        <StatusButton type="button" aria-label="scale"><Icon name="caret" size={9} /></StatusButton>
        <Tools names={["annoBulb", "annoScale", "isolate", "gear", "full", "menu"]} />
      </StatusRight>
    </Status>
  );
}

export default function App() {
  return (
    <>
      <GlobalStyle />
      <Window>
        <TitleBar>
          <Icon name="logo" size={12} />
          <TitleText>中望CAD 2023 (剩余 30 天试用) - [Drawing1.dwg]</TitleText>
          <WindowButton type="button" aria-label="minimize"><Icon name="min" size={8} /></WindowButton>
          <WindowButton type="button" aria-label="restore"><Icon name="restore" size={8} /></WindowButton>
          <WindowButton type="button" aria-label="close"><Icon name="close" size={8} /></WindowButton>
        </TitleBar>
        <MenuBar>
          {menus.map((m) => <MenuItem key={m} type="button">{m}</MenuItem>)}
        </MenuBar>
        <Toolbars />
        <Main>
          <Left>
            <Workspace>
              <SideBar>
                <SideTools $height={264}><Tools names={drawTools} /></SideTools>
              </SideBar>
              <Drawing />
              <SideBar>
                <SideTools $height={264}><Tools names={modifyTools} /></SideTools>
                <SideHandle />
                <SideTools $height={74}><Tools names={orderTools} /></SideTools>
              </SideBar>
            </Workspace>
            <CommandLine />
          </Left>
          <Properties />
          <Calculator />
        </Main>
        <StatusBar />
        <LayerDialog />
      </Window>
    </>
  );
}

const sans = `"Noto Sans", "Noto Sans CJK SC", sans-serif`;
const mono = `"Liberation Mono", "Noto Sans CJK SC", monospace`;
const serif = `"Liberation Serif", "Noto Sans CJK SC", serif`;

const GlobalStyle = createGlobalStyle`
  * {
    box-sizing: border-box;
  }
  body {
    margin: 0;
    font-family: ${sans};
    font-size: 9px;
    color: #dfe3e8;
    background: #313844;
  }
  button, input, select {
    margin: 0;
    font: inherit;
    color: inherit;
  }
`;

const Svg = styled.svg`
  display: block;
  flex: none;
`;

const Window = styled.div`
  position: relative;
  display: flex;
  flex-direction: column;
  height: 100vh;
  overflow: hidden;
`;

const PlainButton = styled.button`
  display: grid;
  place-items: center;
  padding: 0;
  border: 0;
  background: none;
`;

const TitleBar = styled.header`
  display: flex;
  align-items: center;
  flex: none;
  height: 17px;
  padding: 0 1px;
  background: #fff;
  color: #8e9196;
`;

const TitleText = styled.div`
  flex: 1;
  padding-left: 2px;
  font-size: 9px;
`;

const WindowButton = styled(PlainButton)`
  width: 35px;
  height: 17px;
`;

const MenuBar = styled.nav`
  display: flex;
  gap: 11px;
  flex: none;
  height: 15px;
  padding-left: 6px;
  background: #2d373e;
  border-bottom: 1px solid #647078;
`;

const MenuItem = styled(PlainButton)`
  color: #eceff2;
`;

const Toolbar = styled.div`
  display: flex;
  flex: none;
  height: 16px;
  padding: 0 1px;
  border-bottom: 1px solid #4a5563;
`;

const Handle = styled.span`
  flex: none;
  width: 3px;
  border-right: 2px solid #65717f;
  background: #313844;
`;

const ToolButton = styled(PlainButton)`
  flex: none;
  width: 15px;
  height: 15px;
  background: #3d4652;
`;

const UndoGroup = styled.div`
  display: flex;
  ${ToolButton} {
    background: #1f2530;
  }
`;

const DropButton = styled(PlainButton)`
  width: 8px;
  background: #1f2530;
`;

const ComboBox = styled.div`
  display: flex;
  align-items: center;
  flex: none;
  width: ${(p) => p.$width}px;
  height: 15px;
  padding-right: 2px;
  background: #1f2430;
  color: #c3c8ce;
`;

const ComboIcon = styled.span`
  display: grid;
  place-items: center;
  width: 15px;
  height: 15px;
  background: #3d4652;
`;

const ComboSelect = styled.select`
  flex: 1;
  min-width: 0;
  padding: 0 2px;
  border: 0;
  appearance: none;
  background: none;
  font-family: ${mono};
  font-size: ${(p) => (p.$cjk ? 9 : 8)}px;
  color: #9096a0;
`;

const LayerState = styled.span`
  display: flex;
  align-items: center;
  gap: 1px;
  padding-left: 2px;
`;

const Swatch = styled.i`
  flex: none;
  width: ${(p) => p.$size}px;
  height: ${(p) => p.$size}px;
  background: #fff;
`;

const Dash = styled.i`
  flex: none;
  width: ${(p) => p.$width}px;
  height: 1px;
  background: #8b929b;
`;

const Main = styled.main`
  display: flex;
  flex: 1;
  min-height: 0;
  gap: 4px;
  padding: 2px 2px 0 0;
  background: #292e36;
`;

const Left = styled.div`
  display: flex;
  flex-direction: column;
  flex: 1;
  min-width: 0;
  margin-right: -3px;
`;

const Workspace = styled.div`
  display: flex;
  flex: 1;
  min-height: 0;
`;

const SideBar = styled.div`
  flex: none;
  width: 18px;
  background: #313844;
`;

const SideTools = styled.div`
  display: flex;
  flex-direction: column;
  height: ${(p) => p.$height}px;
  width: 16px;
  margin-top: 1px;
  border-left: 1px solid #65717f;
  background: #3d4652;
  ${ToolButton} {
    flex: 1;
    height: auto;
    min-height: 0;
  }
`;

const SideHandle = styled.div`
  width: 16px;
  height: 4px;
  background: #65717f;
`;

const DrawingArea = styled.div`
  display: flex;
  flex-direction: column;
  flex: 1;
  min-width: 0;
`;

const DocTabs = styled.div`
  display: flex;
  flex: none;
  height: 13px;
  background: #2b2c2f;
`;

const TabArrow = styled(PlainButton)`
  width: 9px;
  background: #363d47;
`;

const DocTab = styled.div`
  display: flex;
  align-items: center;
  width: 130px;
  padding: 0 7px 0 2px;
  background: #4d5f7e;
`;

const DocName = styled.span`
  flex: 1;
  padding-left: 1px;
  font-family: ${mono};
  font-size: 8px;
  font-weight: bold;
`;

const NewTab = styled(PlainButton)`
  width: 22px;
  background: #3a4049;
`;

const Canvas = styled.div`
  position: relative;
  flex: 1;
  min-height: 0;
  background: #212830;
`;

const DocControls = styled.div`
  display: flex;
  justify-content: flex-end;
  gap: 9px;
  padding: 7px 6px;
`;

const Ucs = styled.svg`
  position: absolute;
  left: 0;
  bottom: 0;
  text {
    font-family: Lato, sans-serif;
    font-size: 16px;
    font-weight: 300;
    fill: #b4bac1;
  }
`;

const LayoutTabs = styled.div`
  display: flex;
  gap: 1px;
  flex: none;
  height: 12px;
  margin-bottom: 1px;
  padding-left: 2px;
  background: #2b2c2f;
`;

const LayoutNav = styled(PlainButton)`
  width: 11px;
  background: #363d47;
  color: ${(p) => (p.$bright ? "#fff" : "#949ba5")};
`;

const LayoutTab = styled(PlainButton)`
  width: ${(p) => p.$width}px;
  overflow: hidden;
  font-family: ${serif};
  font-size: 12px;
  line-height: 12px;
  font-weight: ${(p) => (p.$active ? "bold" : "normal")};
  background: ${(p) => (p.$active ? "#4d6284" : "#363d47")};
`;

const CommandBox = styled.div`
  display: flex;
  flex: none;
  height: 112px;
  padding-right: 2px;
  border-top: 1px solid #3b434e;
  background: #2b2e32;
`;

const CommandGrip = styled.div`
  width: 14px;
  padding: 2px 3px;
  background: #404957;
  color: #727a86;
`;

const CommandBody = styled.div`
  display: flex;
  flex-direction: column;
  flex: 1;
`;

const LogRow = styled.div`
  display: flex;
  flex: 1;
  border-bottom: 1px solid #3e4248;
`;

const Log = styled.div`
  flex: 1;
  padding-left: 1px;
`;

const LogLine = styled.div`
  height: 14px;
  font-family: ${mono};
  font-size: 12px;
  line-height: 14px;
  color: #a0a3a7;
`;

const Mono = styled.span`
  font-size: 10px;
  white-space: pre;
`;

const CommandInput = styled.input`
  height: 16px;
  border: 0;
  background: none;
`;

const Track = styled.div`
  display: flex;
  flex-direction: column;
  align-items: center;
  flex: none;
  width: ${(p) => p.$width}px;
  margin-top: ${(p) => p.$top}px;
  padding: 2px 0;
  background: #3a3e44;
  color: #858b93;
`;

const Thumb = styled.div`
  flex: none;
  width: 100%;
  height: ${(p) => p.$height}px;
  margin-top: ${(p) => p.$top}px;
  background: #56606b;
`;

const TrackEnd = styled.div`
  margin-top: auto;
`;

const Panel = styled.aside`
  display: flex;
  flex-direction: column;
  flex: none;
  width: ${(p) => p.$width}px;
  min-height: 0;
  overflow: hidden;
  background: #434c57;
`;

const PanelTitle = styled.h2`
  display: flex;
  align-items: center;
  justify-content: space-between;
  flex: none;
  height: 14px;
  margin: 0;
  padding: 0 4px 0 6px;
  background: #515d69;
  font-size: 10px;
  font-weight: bold;
`;

const SelectionRow = styled.div`
  display: flex;
  align-items: center;
  flex: none;
  height: 19px;
  padding: 0 3px 0 5px;
  ${ToolButton} {
    background: none;
  }
  ${ToolButton}:first-of-type {
    margin-left: 3px;
  }
`;

const SelectionSelect = styled.select`
  flex: 1;
  min-width: 0;
  height: 19px;
  padding: 0;
  border: 0;
  appearance: none;
  background: none;
`;

const Sections = styled.div`
  padding: 5px 19px 0 3px;
`;

const SectionTitle = styled.h3`
  display: flex;
  align-items: center;
  justify-content: space-between;
  height: 28px;
  margin: 0;
  padding: 12px 3px 0 2px;
  border-bottom: 2px solid #7a848e;
  font-size: 9px;
  font-weight: bold;
`;

const PropTable = styled.table`
  width: 100%;
  border-spacing: 0;
  table-layout: fixed;
`;

const PropName = styled.th`
  width: 58px;
  height: 17px;
  padding: 0 0 0 2px;
  border-bottom: 1px solid #4c5661;
  border-right: 1px solid #4c5661;
  font-weight: normal;
  line-height: 12px;
  text-align: left;
  white-space: nowrap;
`;

const PropValue = styled.td`
  padding: 0;
  border-bottom: 1px solid #4c5661;
  line-height: 12px;
  color: ${(p) => (p.$muted ? "#98a0a9" : "#dfe3e8")};
`;

const ValueLine = styled.span`
  display: flex;
  align-items: center;
  gap: 1px;
`;

const CalcBody = styled.div`
  display: flex;
  flex: 1;
  min-height: 0;
  padding-right: 3px;
`;

const CalcContent = styled.div`
  display: flex;
  flex-direction: column;
  flex: 1;
  padding: 3px 3px 0 3px;
`;

const CalcTools = styled.div`
  display: flex;
  gap: 2px;
  flex: none;
  height: 26px;
  padding-left: 2px;
`;

const CalcTool = styled(PlainButton)`
  width: 16px;
  height: 16px;
  border: 1px solid #6a747e;
`;

const VarTools = styled.div`
  display: flex;
  gap: 2px;
  flex: none;
  height: 16px;
  padding-left: 3px;
`;

const VarTool = styled(CalcTool)`
  border-color: transparent;
`;

const History = styled.div`
  flex: none;
  height: 58px;
  border: 1px solid #566059;
`;

const CalcInput = styled.input`
  flex: none;
  height: 14px;
  margin-top: 1px;
  border: 1px solid #566059;
  background: none;
`;

const CalcLabel = styled.div`
  flex: none;
  height: 18px;
  padding: 5px 0 0 2px;
  font-size: 10px;
  line-height: 13px;
`;

const KeyGrid = styled.div`
  display: grid;
  grid-template-columns: repeat(5, 31px);
  column-gap: 5px;
  align-content: space-between;
  flex: none;
  height: ${(p) => p.$height}px;
  margin: 0 0 3px 6px;
`;

const Key = styled(PlainButton)`
  height: 15px;
  border: 1px solid #69736f;
  line-height: 12px;
`;

const TreeBox = styled.div`
  display: flex;
  flex: none;
  height: 99px;
  overflow: hidden;
  border: 1px solid #566059;
`;

const Tree = styled.ul`
  display: flex;
  flex-direction: column;
  flex: 1;
  height: 100px;
  margin: 0;
  padding: 0;
  list-style: none;
`;

const TreeItem = styled.li`
  display: flex;
  align-items: center;
  flex: 1;
  gap: 3px;
  min-height: 0;
  padding-left: ${(p) => (p.$leaf ? 29 : 3)}px;
`;

const Expander = styled.i`
  width: 7px;
  height: 7px;
  margin-right: 1px;
  border: 3px solid #fff;
  border-width: 3px 1px;
  background: #434c57;
`;

const DetailLabel = styled.div`
  flex: none;
  height: 14px;
  line-height: 13px;
`;

const DetailBox = styled.div`
  flex: none;
  height: 57px;
  margin-bottom: 13px;
  border: 1px solid #566059;
`;

const UnitRow = styled.div`
  display: grid;
  grid-template-columns: 88px 1fr;
  flex: none;
  padding: 1px 0 0 2px;
  line-height: 12px;
`;

const UnitCell = styled.span`
  display: flex;
  align-items: center;
`;

const Status = styled.footer`
  display: flex;
  align-items: center;
  flex: none;
  height: 17px;
  padding: 0 2px 0 4px;
  border-top: 1px solid #252a32;
  background: #2f3640;
`;

const Coords = styled.div`
  width: 186px;
  font-family: ${mono};
  font-size: 8px;
`;

const StatusButton = styled(PlainButton)`
  width: 15px;
  height: 15px;
  border: 1px solid ${(p) => (p.$on ? "#5b83a8" : "transparent")};
  background: ${(p) => (p.$on ? "#415f7c" : "none")};
`;

const StatusRight = styled.div`
  display: flex;
  align-items: center;
  margin-left: auto;
  ${ToolButton} {
    background: none;
  }
`;

const StatusText = styled.span`
  width: ${(p) => p.$width}px;
  padding-left: 2px;
  font-family: ${serif};
  color: #7e858f;
`;

const Dialog = styled.div`
  position: absolute;
  left: 400px;
  top: 198px;
  width: 288px;
  background: #f0f0f0;
  box-shadow: 0 2px 5px rgba(0, 0, 0, 0.6);
  color: #333;
`;

const DialogTitle = styled.div`
  display: flex;
  align-items: center;
  height: 21px;
  padding: 0 8px 0 4px;
  background: #fff;
  color: #111;
`;

const DialogName = styled.div`
  flex: 1;
  padding-left: 2px;
`;

const DialogBody = styled.div`
  padding: 5px 10px 8px 9px;
`;

const DialogRow = styled.div`
  display: flex;
  align-items: center;
  height: 14px;
  padding-left: 1px;
`;

const DialogButton = styled(PlainButton)`
  width: 50px;
  height: 14px;
  border: 1px solid #b4b4b4;
  background: #e1e1e1;
  font-family: ${serif};
  &:disabled {
    border-color: #c3c3c3;
    background: #cbcbcb;
    color: #999;
  }
`;

const FilterBox = styled.div`
  display: flex;
  align-items: center;
  flex: 1;
  height: 13px;
  margin: 0 7px;
  padding-right: 2px;
  border: 1px solid #b0b0b0;
  background: #fff;
`;

const FilterSelect = styled.select`
  flex: 1;
  height: 11px;
  padding: 0;
  border: 0;
  appearance: none;
  background: none;
`;

const CheckLabel = styled.label`
  display: flex;
  align-items: center;
  gap: 2px;
  min-width: 53px;
  color: ${(p) => (p.$muted ? "#999" : "#333")};
`;

const Check = styled.input`
  display: grid;
  place-items: center;
  width: 10px;
  height: 10px;
  border: 1px solid #444;
  appearance: none;
  background: #fff;
  &:disabled {
    border-color: #c8c8c8;
  }
  &:checked::before {
    content: "";
    width: 6px;
    height: 3px;
    margin-bottom: 2px;
    border: solid #333;
    border-width: 0 0 1px 1px;
    transform: rotate(-45deg);
  }
`;

const LayerList = styled.ul`
  height: 180px;
  margin: 2px 0 8px;
  padding: 1px;
  border: 1px solid #a5a8ac;
  background: #fff;
  list-style: none;
`;

const LayerItem = styled.li`
  height: 10px;
  background: #0078d7;
  font-family: ${mono};
  line-height: 10px;
  color: #fff;
`;

const DialogFooter = styled.div`
  display: flex;
  align-items: center;
  gap: 14px;
  padding-left: 1px;
`;

const CloseButton = styled(DialogButton)`
  width: 43px;
  margin-left: auto;
  border-color: #0078d7;
`;
